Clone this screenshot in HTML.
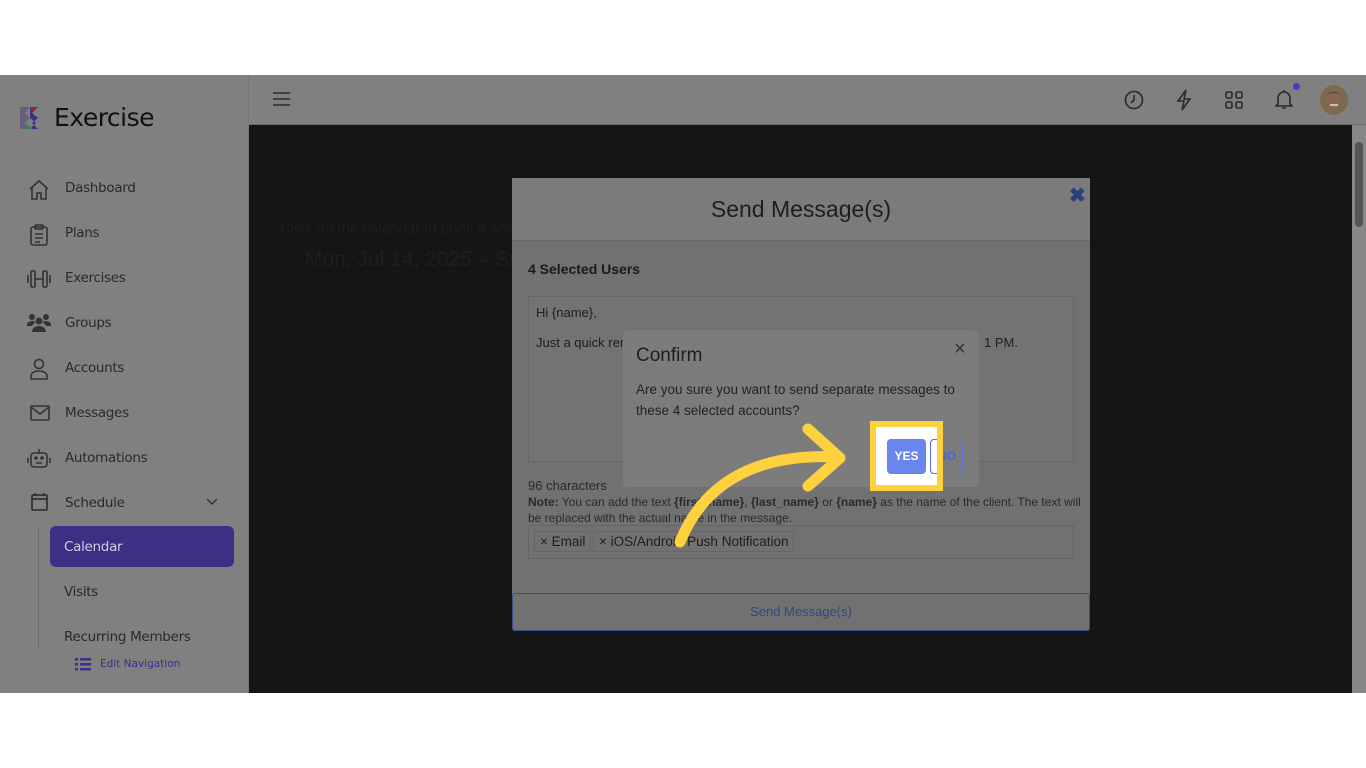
<!DOCTYPE html>
<html><head><meta charset="utf-8"><style>
*{box-sizing:border-box;margin:0;padding:0}
body{width:1366px;height:768px;background:#fff;font-family:"Liberation Sans",sans-serif;position:relative;overflow:hidden}
.app{position:absolute;left:0;top:75px;width:1366px;height:618px;background:#151515;overflow:hidden}
.side{position:absolute;left:0;top:0;width:249px;height:618px;background:#808080;border-right:1px solid #777}
.top{position:absolute;left:249px;top:0;width:1117px;height:50px;background:#808080;border-bottom:1px solid #6a6a6a}
.nav{position:absolute;left:65px;font-size:13.5px;color:#2a2a2a;font-family:"DejaVu Sans",sans-serif;letter-spacing:-.3px}
.ic{position:absolute;left:28px}
.abs{position:absolute}
</style></head><body>
<div class="app">
 <div class="side">
  <svg class="abs" style="left:17px;top:29px" width="27" height="28" viewBox="0 0 27 28"><path d="M3 3h10l-5 6 5 5-5 5 5 6H3z" fill="#6a5f7a"/><path d="M13 3h8l-6 6 6 5-6 5 6 6h-8l6-6-6-5z" fill="#3a2f8a"/><path d="M13 3h8l-6 6" fill="#8a2a2a"/><path d="M9 19l6 6H9z" fill="#3f7a6a"/></svg>
  <div class="abs" style="left:54px;top:28px;font-size:25px;color:#111;font-family:'DejaVu Sans',sans-serif;letter-spacing:-.5px">Exercise</div>
  <svg class="ic" style="top:104px" width="22" height="22" viewBox="0 0 22 22" fill="none" stroke="#333" stroke-width="1.6"><path d="M2 10L11 2l9 8M4 8v12h5v-6h4v6h5V8"/></svg>
  <div class="nav" style="top:105px">Dashboard</div>
  <svg class="ic" style="top:149px;left:30px" width="18" height="22" viewBox="0 0 18 22" fill="none" stroke="#333" stroke-width="1.6"><rect x="1" y="3" width="16" height="18" rx="2"/><rect x="5" y="1" width="8" height="4" rx="1"/><path d="M5 10h8M5 14h8M5 18h5"/></svg>
  <div class="nav" style="top:150px">Plans</div>
  <svg class="ic" style="top:194px;left:27px" width="24" height="20" viewBox="0 0 24 20" fill="none" stroke="#333" stroke-width="1.6"><rect x="4" y="2" width="4" height="16" rx="1"/><rect x="16" y="2" width="4" height="16" rx="1"/><path d="M1 6v8M23 6v8M8 10h8"/></svg>
  <div class="nav" style="top:195px">Exercises</div>
  <svg class="ic" style="top:238px;left:27px" width="24" height="20" viewBox="0 0 24 20" fill="#333"><circle cx="5" cy="4" r="3"/><circle cx="19" cy="4" r="3"/><circle cx="12" cy="8" r="3.5"/><path d="M0 12c0-3 3-4 6-4 1 0 2 1 2 2-2 1-3 2-3 3H0zM24 12c0-3-3-4-6-4-1 0-2 1-2 2 2 1 3 2 3 3h5zM5 19c0-4 3-6 7-6s7 2 7 6z"/></svg>
  <div class="nav" style="top:240px">Groups</div>
  <svg class="ic" style="top:283px;left:30px" width="18" height="22" viewBox="0 0 18 22" fill="none" stroke="#333" stroke-width="1.6"><circle cx="9" cy="6" r="4.5"/><path d="M1 21v-3c0-3 3-5 8-5s8 2 8 5v3z"/></svg>
  <div class="nav" style="top:285px">Accounts</div>
  <svg class="ic" style="top:330px;left:30px" width="20" height="16" viewBox="0 0 20 16" fill="none" stroke="#333" stroke-width="1.6"><rect x="1" y="1" width="18" height="14" rx="1"/><path d="M1 2l9 7 9-7"/></svg>
  <div class="nav" style="top:330px">Messages</div>
  <svg class="ic" style="top:372px;left:27px" width="24" height="22" viewBox="0 0 24 22" fill="none" stroke="#333" stroke-width="1.6"><rect x="4" y="6" width="16" height="14" rx="3"/><path d="M12 2v4M1 11v5M23 11v5M9 16h6"/><circle cx="9" cy="11" r="1" fill="#333"/><circle cx="15" cy="11" r="1" fill="#333"/></svg>
  <div class="nav" style="top:375px">Automations</div>
  <svg class="ic" style="top:417px;left:31px" width="17" height="20" viewBox="0 0 17 20" fill="none" stroke="#333" stroke-width="1.8"><rect x="1" y="3" width="15" height="15" rx="1"/><path d="M1 7h15M4 1v3M13 1v3"/></svg>
  <div class="nav" style="top:420px">Schedule</div>
  <svg class="abs" style="left:206px;top:423px" width="12" height="8" viewBox="0 0 12 8" fill="none" stroke="#333" stroke-width="1.4"><path d="M1 1l5 5 5-5"/></svg>
  <div class="abs" style="left:38px;top:452px;width:1px;height:123px;background:#6e6e6e"></div>
  <div class="abs" style="left:50px;top:451px;width:184px;height:41px;background:#3d2f86;border-radius:6px"></div>
  <div class="nav" style="top:464px;left:64px;color:#cfcde0">Calendar</div>
  <div class="nav" style="top:509px;left:64px">Visits</div>
  <div class="nav" style="top:554px;left:64px">Recurring Members</div>
  <svg class="abs" style="left:75px;top:583px" width="16" height="13" viewBox="0 0 16 13" fill="#3b2f8a"><rect x="0" y="0" width="3" height="2.5"/><rect x="5" y="0" width="11" height="2.5"/><rect x="0" y="5" width="3" height="2.5"/><rect x="5" y="5" width="11" height="2.5"/><rect x="0" y="10" width="3" height="2.5"/><rect x="5" y="10" width="11" height="2.5"/></svg>
  <div class="abs" style="left:100px;top:583px;font-size:10.5px;color:#3b2f8a;font-family:'DejaVu Sans',sans-serif">Edit Navigation</div>
 </div>
 <div class="top">
  <svg class="abs" style="left:24px;top:17px" width="17" height="14" viewBox="0 0 17 14" stroke="#2a2a2a" stroke-width="1.6"><path d="M0 1h17M0 7h17M0 13h17"/></svg>
  <svg class="abs" style="left:875px;top:15px" width="20" height="20" viewBox="0 0 20 20" fill="none" stroke="#2a2a2a" stroke-width="1.6"><circle cx="10" cy="10" r="8.5"/><path d="M10 5v5l-3 3"/></svg>
  <svg class="abs" style="left:927px;top:14px" width="16" height="22" viewBox="0 0 16 22" fill="none" stroke="#2a2a2a" stroke-width="1.6"><path d="M10 1L2 12h6l-2 9 8-11H8z"/></svg>
  <svg class="abs" style="left:976px;top:16px" width="18" height="18" viewBox="0 0 18 18" fill="none" stroke="#2a2a2a" stroke-width="1.6"><rect x="1" y="1" width="6" height="6" rx="1.5"/><rect x="11" y="1" width="6" height="6" rx="1.5"/><rect x="1" y="11" width="6" height="6" rx="1.5"/><rect x="11" y="11" width="6" height="6" rx="1.5"/></svg>
  <svg class="abs" style="left:1026px;top:14px" width="18" height="21" viewBox="0 0 18 21" fill="none" stroke="#2a2a2a" stroke-width="1.6"><path d="M3 15V9a6 6 0 0112 0v6l2 2H1zM7 19h4M9 1v2"/></svg>
  <div class="abs" style="left:1044px;top:8px;width:7px;height:7px;border-radius:50%;background:#4a3ac0"></div>
  <svg class="abs" style="left:1071px;top:10px" width="28" height="30" viewBox="0 0 28 30"><ellipse cx="14" cy="15" rx="14" ry="15" fill="#7a6a50"/><ellipse cx="14" cy="16" rx="7" ry="9" fill="#8a6550"/><path d="M7 12c0-6 14-6 14 0 0-3-3-5-7-5s-7 2-7 5z" fill="#2a1f1a"/><path d="M10 20h8" stroke="#ddd" stroke-width="1.5"/></svg>
 </div>
 <div class="abs" style="left:280px;top:145px;font-size:15px;color:#1f1f1f">Click on the calendar to book a session</div>
 <div class="abs" style="left:305px;top:173px;font-size:21px;color:#1f1f1f">Mon, Jul 14, 2025 – Sun,</div>
 <div class="abs" style="left:1352px;top:50px;width:14px;height:568px;background:#888"></div>
 <div class="abs" style="left:1355px;top:67px;width:8px;height:85px;background:#555;border-radius:4px"></div>
 <div class="abs" style="left:512px;top:103px;width:578px;height:453px;background:#717171;border-radius:3px">
  <div class="abs" style="left:0;top:0;width:578px;height:63px;background:#7b7b7b;border-bottom:1px solid #6a6a6a"></div>
  <div class="abs" style="left:0;top:18px;width:578px;text-align:center;font-size:23px;color:#1e1e1e">Send Message(s)</div>
  <div class="abs" style="left:557px;top:5px;font-size:20px;color:#2b3f7a;font-weight:bold">✖</div>
  <div class="abs" style="left:16px;top:83px;font-size:14px;font-weight:bold;color:#1a1a1a">4 Selected Users</div>
  <div class="abs" style="left:16px;top:118px;width:546px;height:166px;border:1px solid #666;background:#737373"></div>
  <div class="abs" style="left:24px;top:127px;font-size:13px;color:#1e1e1e">Hi {name},</div>
  <div class="abs" style="left:24px;top:157px;font-size:13px;color:#1e1e1e">Just a quick ren</div>
  <div class="abs" style="left:472px;top:157px;font-size:13px;color:#1e1e1e">1 PM.</div>
  <div class="abs" style="left:16px;top:300px;font-size:13px;color:#2a2a2a">96 characters</div>
  <div class="abs" style="left:16px;top:316px;width:555px;font-size:12px;color:#2a2a2a;line-height:16px"><b>Note:</b> You can add the text <b>{first_name}</b>, <b>{last_name}</b> or <b>{name}</b> as the name of the client. The text will be replaced with the actual name in the message.</div>
  <div class="abs" style="left:16px;top:347px;width:546px;height:34px;border:1px solid #666"></div>
  <div class="abs" style="left:22px;top:353px;padding:2px 5px;border:1px solid #666;font-size:13.5px;color:#1e1e1e">× Email</div>
  <div class="abs" style="left:81px;top:353px;padding:2px 5px;border:1px solid #666;font-size:13.5px;color:#1e1e1e">× iOS/Android Push Notification</div>
  <div class="abs" style="left:0;top:415px;width:578px;height:38px;border:1px solid #3a4f8a;border-radius:3px;text-align:center;line-height:36px;font-size:13px;color:#33467f">Send Message(s)</div>
 </div>
 <div class="abs" style="left:623px;top:255px;width:356px;height:157px;background:#7c7c7c;border-radius:4px">
  <div class="abs" style="left:13px;top:15px;font-size:19px;color:#1e1e1e">Confirm</div>
  <div class="abs" style="left:331px;top:8px;font-size:20px;color:#333">×</div>
  <div class="abs" style="left:13px;top:49px;width:340px;font-size:13.5px;line-height:21px;color:#222">Are you sure you want to send separate messages to these 4 selected accounts?</div>
 </div>
 <div class="abs" style="left:870px;top:346px;width:73px;height:70px;background:#fdd23e"></div>
 <div class="abs" style="left:876px;top:352px;width:61px;height:58px;background:#fff"></div>
 <div class="abs" style="left:930px;top:364px;width:33px;height:35px;border:1.5px solid #5a73e0;border-radius:4px;background:#7c7c7c;font-size:12px;font-weight:bold;color:#4a63d0;line-height:32px;text-align:right;padding-right:6px">NO</div>
 <div class="abs" style="left:930px;top:364px;width:7px;height:35px;background:#fff;border:1.5px solid #5a73e0;border-right:none;border-radius:4px 0 0 4px"></div>
 <div class="abs" style="left:937px;top:352px;width:6px;height:58px;background:#fdd23e"></div>
 <div class="abs" style="left:887px;top:364px;width:39px;height:35px;background:#6a86ee;border-radius:4px;font-size:12px;font-weight:bold;color:#fff;line-height:35px;text-align:center">YES</div>
 <svg class="abs" style="left:0;top:0" width="1366" height="618"><g fill="none" stroke="#fdd23e" stroke-width="11" stroke-linecap="round" stroke-linejoin="round"><path d="M680 467C705 405 760 378 838 382"/><path d="M808 354L840 383 808 411"/></g></svg>
</div>
</body></html>
